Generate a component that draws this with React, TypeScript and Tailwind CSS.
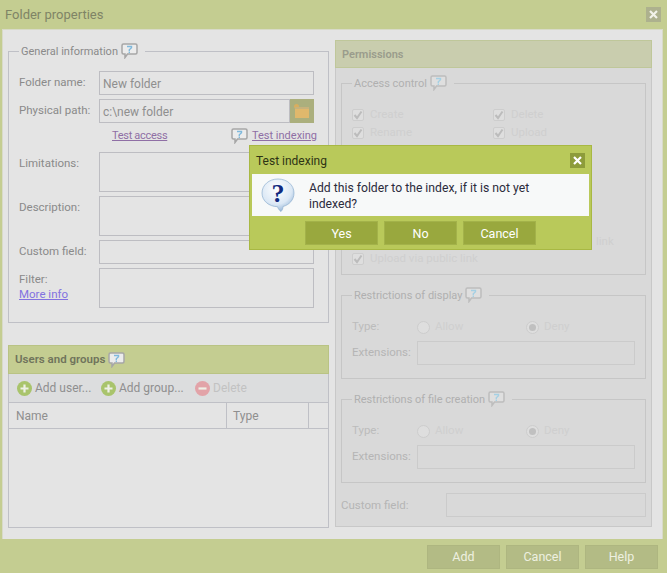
import type { ReactNode } from "react";

function HelpIcon({ faded }: { faded?: boolean }) {
  return (
    <svg width="17" height="16" viewBox="0 0 17 16" className="shrink-0">
      <path d="M2.500 1h12a1.500 1.500 0 0 1 1.500 1.500v7a1.500 1.500 0 0 1-1.500 1.500h-8l-2.500 3.500v-3.500h-1.500a1.500 1.500 0 0 1-1.500-1.500v-7a1.500 1.500 0 0 1 1.500-1.500z" fill={faded ? "#dfdfdf" : "#ececec"} stroke={faded ? "#bdbdbd" : "#a6a6a6"} strokeWidth="1.500" />
      <path d="M6 3.500h4.500v1.300l-2.200 2v1.500M8.300 8.800v1.200" fill="none" stroke={faded ? "#a4d0e4" : "#7fb9dc"} strokeWidth="1.400" />
    </svg>
  );
}

function FolderIcon() {
  return (
    <svg width="16" height="16" viewBox="0 0 16 16">
      <circle cx="2.500" cy="3.500" r="2.500" fill="#d9ae5f" />
      <rect x="1" y="4" width="14" height="2" fill="#c7b27c" />
      <rect x="1" y="6" width="14" height="9" fill="#e0b86c" />
    </svg>
  );
}

function RoundIcon({ color, minus }: { color: string; minus?: boolean }) {
  return (
    <svg width="15" height="15" viewBox="0 0 15 15" className="shrink-0">
      <circle cx="7.500" cy="7.500" r="7.500" fill={color} />
      <path d={minus ? "M3.500 7.500h8" : "M3.500 7.500h8M7.500 3.500v8"} stroke="#eef0e6" strokeWidth="2.200" />
    </svg>
  );
}

function QuestionIcon() {
  return (
    <svg width="34" height="34" viewBox="0 0 34 34" className="shrink-0">
      <defs>
        <radialGradient id="qb" cx="0.45" cy="0.3" r="0.8">
          <stop offset="0" stopColor="#ffffff" />
          <stop offset="0.6" stopColor="#dbe8f5" />
          <stop offset="1" stopColor="#7ba3cc" />
        </radialGradient>
      </defs>
      <path d="M17 1c9 0 16 6 16 14 0 7-5 12-11 13.500 0 1.500-.5 3.500-2 5-1.500-1-3-3-3.500-4.800C8 28.500 1 23 1 15 1 7 8 1 17 1z" fill="url(#qb)" stroke="#8fb0d0" strokeWidth="0.7" />
      <text x="17" y="24" textAnchor="middle" fontFamily="'Liberation Serif', serif" fontWeight="700" fontSize="26" fill="#0f2a80">?</text>
    </svg>
  );
}

function Fieldset({ title, className, children, faded }: { title: string; className: string; children: ReactNode; faded?: boolean }) {
  return (
    <fieldset className={`border ${faded ? "border-[#c6c6c6]" : "border-[#bfc0c6]"} ${className}`}>
      <legend className={`px-[2px] h-[22px] flex items-center gap-[3px] text-[11px] ${faded ? "text-[#b0b0b0]" : "text-[#8a8a8a]"}`}>
        <span className="pt-[2px]">{title}</span>
        <HelpIcon faded={faded} />
        <span className="w-[2px]" />
      </legend>
      {children}
    </fieldset>
  );
}

function Field({ label, tall, children }: { label: ReactNode; tall?: boolean; children?: ReactNode }) {
  return (
    <div className="flex">
      <div className="w-[80px] pt-[2px] text-[#8a8a8a] leading-[18px]">{label}</div>
      {children ?? <div className={`w-[215px] border border-[#bdbdc2] ${tall ? "h-[40px]" : "h-[24px]"}`} />}
    </div>
  );
}

function TextBox({ value, className }: { value?: string; className: string }) {
  return <div className={`border border-[#bdbdc2] h-[24px] px-[3px] leading-[24px] text-[12px] text-[#8f8f8f] ${className}`}>{value}</div>;
}

function Check({ label }: { label: string }) {
  return (
    <div className="h-[18px] flex items-center gap-[6px] text-[#cfcfcf] whitespace-nowrap">
      <span className="w-[12px] h-[12px] rounded-[2px] border border-[#cdcdcd] bg-[#dedede] flex items-center justify-center">
        <svg width="10" height="10" viewBox="0 0 10 10">
          <path d="M1.500 5l2.500 3 4.500-6.500" fill="none" stroke="#bcbcbc" strokeWidth="2" />
        </svg>
      </span>
      <span>{label}</span>
    </div>
  );
}

function Radio({ label, on }: { label: string; on?: boolean }) {
  return (
    <div className="flex items-center gap-[5px] text-[#cfcfcf]">
      <span className="w-[13px] h-[13px] rounded-full border border-[#cdcdcd] bg-[#dedede] flex items-center justify-center">
        {on && <span className="w-[7px] h-[7px] rounded-full bg-[#c0c0c0]" />}
      </span>
      <span>{label}</span>
    </div>
  );
}

function Restriction({ title, className }: { title: string; className?: string }) {
  return (
    <Fieldset title={title} faded className={`h-[95px] px-[10px] ${className ?? ""}`}>
      <div className="flex items-center h-[24px] mt-[9px] text-[#bcbcbc]">
        <span className="w-[65px]">Type:</span>
        <span className="w-[109px]"><Radio label="Allow" /></span>
        <Radio label="Deny" on />
      </div>
      <div className="flex items-center mt-[2px] text-[#b5b5b5]">
        <span className="w-[65px]">Extensions:</span>
        <div className="w-[218px] h-[24px] border border-[#cbcbcb]" />
      </div>
    </Fieldset>
  );
}

function FooterButton({ label, className }: { label: string; className: string }) {
  return <div className={`w-[73px] h-[24px] pt-[2px] flex items-center justify-center text-[12.5px] ${className}`}>{label}</div>;
}

export default function App() {
  return (
    <div className="relative w-[667px] h-[573px] bg-[#c4cd91] overflow-hidden text-[11.5px] flex flex-col font-['Roboto','Open_Sans',sans-serif]">
      <div className="h-[29px] shrink-0 flex items-center justify-between pl-[5px] pr-[6px]">
        <span className="text-[13px] text-[#7f8466]">Folder properties</span>
        <span className="w-[15px] h-[15px] bg-[#adb18e] flex items-center justify-center">
          <svg width="9" height="9" viewBox="0 0 9 9"><path d="M1 1l7 7M8 1l-7 7" stroke="#f2f2ea" strokeWidth="2.200" /></svg>
        </span>
      </div>

      <div className="ml-[2px] w-[661px] h-[510px] shrink-0 bg-[#e4e4e4] border-t border-l border-r border-[#d8dac8] flex gap-[6px] pl-[5px] pt-[10px]">
        <div className="w-[321px] flex flex-col">
          <Fieldset title="General information" className="h-[283px] px-[10px]">
            <div className="flex flex-col gap-[4px] pt-[9px]">
              <Field label="Folder name:"><TextBox value="New folder" className="w-[215px]" /></Field>
              <Field label="Physical path:">
                <div className="flex">
                  <TextBox value="c:\new folder" className="w-[191px]" />
                  <div className="w-[24px] h-[24px] bg-[#abaf7d] flex items-center justify-center"><FolderIcon /></div>
                </div>
              </Field>
            </div>
            <div className="flex items-center h-[16px] mt-[5px] ml-[93px] text-[11px] text-[#8f6fa5] whitespace-nowrap">
              <span className="underline w-[54px] tracking-[-0.3px]">Test access</span>
              <span className="ml-[65px]"><HelpIcon /></span>
              <span className="ml-[4px] underline">Test indexing</span>
            </div>
            <div className="flex flex-col gap-[4px] mt-[8px]">
              <Field label="Limitations:" tall />
              <Field label="Description:" tall />
              <Field label="Custom field:" />
              <Field tall label={<><div>Filter:</div><div className="text-[#8272e0] underline -mt-[3px]">More info</div></>} />
            </div>
          </Fieldset>

          <div className="mt-[22px] h-[183px] border border-[#bfc0c6] flex flex-col">
            <div className="h-[29px] shrink-0 -mx-[1px] -mt-[1px] bg-[#c4cd91] border border-[#b9c384] flex items-center gap-[3px] pl-[6px] font-semibold text-[#70745c]">
              <span>Users and groups</span>
              <HelpIcon />
            </div>
            <div className="h-[29px] shrink-0 bg-[#dcddde] border-b border-[#bfc0c6] flex items-center pl-[8px] text-[#8f8f8f] text-[12px] whitespace-nowrap">
              <RoundIcon color="#a9c46c" />
              <span className="ml-[3px] w-[55px]">Add user...</span>
              <span className="ml-[11px]"><RoundIcon color="#a9c46c" /></span>
              <span className="ml-[3px] w-[65px]">Add group...</span>
              <span className="ml-[11px]"><RoundIcon color="#e2a3a8" minus /></span>
              <span className="ml-[3px] text-[#c2c2c2]">Delete</span>
            </div>
            <div className="h-[26px] shrink-0 border-b border-[#bfc0c6] flex text-[#8f8f8f] text-[12px]">
              <div className="w-[218px] border-r border-[#bfc0c6] pl-[7px] pt-[1px] leading-[24px]">Name</div>
              <div className="w-[82px] border-r border-[#bfc0c6] pl-[6px] pt-[1px] leading-[24px]">Type</div>
            </div>
          </div>
        </div>

        <div className="w-[317px] h-[487px] bg-[#d9d9d9] border-l border-r border-b border-[#c8c8c8] flex flex-col">
          <div className="h-[28px] shrink-0 -mx-[1px] pt-[2px] bg-[#c9cdae] border border-[#bfc79a] flex items-center pl-[6px] text-[11px] font-semibold text-[#9a9c8c]">Permissions</div>
          <div className="px-[5px] pt-[4px] flex flex-col">
            <Fieldset title="Access control" faded className="h-[203px] px-[10px]">
              <div className="flex pt-[12px]">
                <div className="w-[141px]">
                  <Check label="Create" />
                  <Check label="Rename" />
                  {/* rows under the dialog */}
                  <div className="h-[108px]" />
                  <Check label="Upload via public link" />
                </div>
                <div>
                  <Check label="Delete" />
                  <Check label="Upload" />
                  <div className="h-[90px]" />
                  <div className="h-[18px] pl-[103px] leading-[18px] text-[#cfcfcf]">link</div>
                </div>
              </div>
            </Fieldset>
            <Restriction title="Restrictions of display" className="mt-[9px]" />
            <Restriction title="Restrictions of file creation" className="mt-[9px]" />
            <div className="flex items-center mt-[10px] text-[#b5b5b5]">
              <span className="w-[105px] pt-[1px]">Custom field:</span>
              <div className="w-[200px] h-[24px] border border-[#cbcbcb]" />
            </div>
          </div>
        </div>
      </div>

      <div className="flex-1 flex justify-end items-center gap-[6px] pr-[9px] pt-[1px] text-[#eef0e0]">
        <FooterButton label="Add" className="bg-[#b3bb85] border border-[#aeb680]" />
        <FooterButton label="Cancel" className="bg-[#b3bb85] border border-[#aeb680]" />
        <FooterButton label="Help" className="bg-[#b3bb85] border border-[#aeb680]" />
      </div>

      <div className="absolute left-[249px] top-[145px] w-[343px] h-[105px] bg-[#b9c95a] border border-[#a8b843] flex flex-col">
        <div className="h-[28px] shrink-0 flex items-center justify-between pl-[6px] pr-[6px] text-[#2e3314] text-[12px]">
          <span className="pt-[2px]">Test indexing</span>
          <span className="w-[15px] h-[15px] bg-[#8d9c3a] flex items-center justify-center">
            <svg width="9" height="9" viewBox="0 0 9 9"><path d="M1 1l7 7M8 1l-7 7" stroke="#ffffff" strokeWidth="2.200" /></svg>
          </span>
        </div>
        <div className="mx-[2px] h-[42px] bg-[#f7f9f9] flex items-center pl-[9px] text-[#2b2b3c] text-[12.2px]">
          <QuestionIcon />
          <p className="ml-[14px] w-[240px] pt-[1px] leading-[16px]">Add this folder to the index, if it is not yet indexed?</p>
        </div>
        <div className="flex justify-center gap-[6px] mt-[5px] text-white">
          <FooterButton label="Yes" className="bg-[#99a83e] border border-[#a3b24a]" />
          <FooterButton label="No" className="bg-[#99a83e] border border-[#a3b24a]" />
          <FooterButton label="Cancel" className="bg-[#99a83e] border border-[#a3b24a]" />
        </div>
      </div>
    </div>
  );
}
